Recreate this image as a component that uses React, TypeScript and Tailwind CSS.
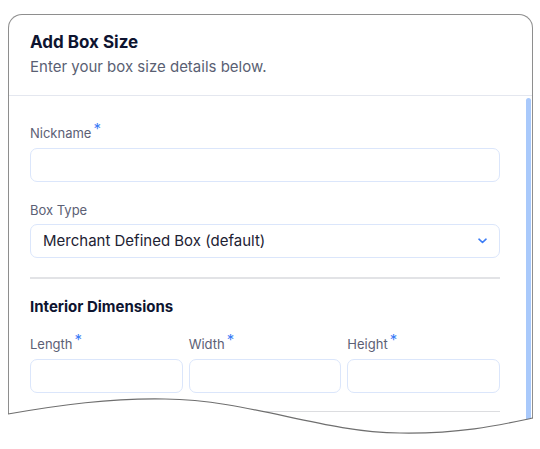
import React from "react";

const Star = () => (
  <span className="text-[#3b7cf6] text-[15px] leading-none relative top-[-5px] ml-[2px]">*</span>
);

const Label = ({ text, star }: { text: string; star?: boolean }) => (
  <div className="h-[18px] flex items-center text-[13px] text-[#5c6075] leading-[18px]">
    <span>{text}</span>
    {star && <Star />}
  </div>
);

const Input = () => (
  <div className="h-[34px] rounded-[7px] border border-[#dbe6fb] bg-white" />
);

export default function App() {
  return (
    <div
      className="w-[540px] h-[449px] bg-white relative overflow-hidden pt-[14px] pl-[8px]"
      style={{ fontFamily: "Inter, 'Noto Sans', sans-serif" }}
    >
      <div className="w-[525px] h-[430px] border-t border-x border-[#8e8e8e] rounded-t-[14px] flex flex-col bg-white">
        <div className="pl-[21px] pt-[15px] pb-[17px] border-b border-[#e4e7ef]">
          <div className="text-[17px] font-bold text-[#0e1430] leading-[24px]">Add Box Size</div>
          <div className="text-[15px] text-[#5a5f73] leading-[22px] mt-[2px]">Enter your box size details below.</div>
        </div>
        <div className="flex flex-1">
          <div className="w-[496px] pl-[21px] pt-[28px]">
            <div className="w-[470px] flex flex-col">
              <Label text="Nickname" star />
              <div className="mt-[6px]"><Input /></div>
              <div className="mt-[19px]"><Label text="Box Type" /></div>
              <div className="mt-[5px] h-[34px] rounded-[7px] border border-[#dbe6fb] flex items-center justify-between pl-[12px] pr-[12px]">
                <span className="text-[15px] text-[#1d2233]">Merchant Defined Box (default)</span>
                <svg width="9" height="6" viewBox="0 0 9 6" fill="none">
                  <path d="M1 1.2L4.5 4.5L8 1.2" stroke="#3b7cf6" strokeWidth="1.6" strokeLinecap="round" strokeLinejoin="round" />
                </svg>
              </div>
              <div className="mt-[19px] h-[2px] bg-[#e2e3e6]" />
              <div className="mt-[18px] text-[15px] font-bold text-[#0e1430] leading-[20px]">Interior Dimensions</div>
              <div className="mt-[18px] grid grid-cols-3 gap-x-[6px]">
                <div className="flex flex-col gap-[6px]">
                  <Label text="Length" star />
                  <Input />
                </div>
                <div className="flex flex-col gap-[6px]">
                  <Label text="Width" star />
                  <Input />
                </div>
                <div className="flex flex-col gap-[6px]">
                  <Label text="Height" star />
                  <Input />
                </div>
              </div>
              <div className="mt-[18px] h-px bg-[#dcdde0]" />
            </div>
          </div>
          <div className="w-[5px] mt-[2px] ml-[21px] rounded-t-full bg-[#a9c9fb]" />
        </div>
      </div>
      <svg className="absolute left-0 top-[380px]" width="540" height="69" viewBox="0 380 540 69">
        <path
          d="M0,414 L8,414 C60,405 110,398 165,399 C250,400 320,432 400,433 C460,434 500,425 533,418 L540,418 L540,449 L0,449 Z"
          fill="#ffffff"
        />
        <path
          d="M8,414 C60,405 110,398 165,399 C250,400 320,432 400,433 C460,434 500,425 533,418"
          fill="none"
          stroke="#6f6f6f"
          strokeWidth="1.2"
        />
      </svg>
    </div>
  );
}
